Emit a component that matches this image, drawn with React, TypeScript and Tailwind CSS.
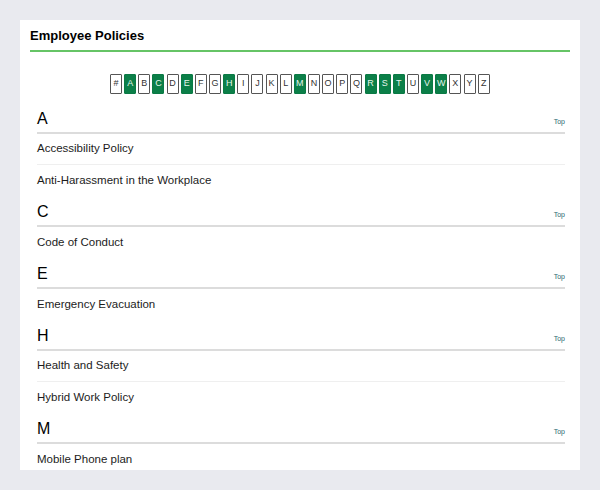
import React from "react";

const letters = ["#", "A", "B", "C", "D", "E", "F", "G", "H", "I", "J", "K", "L", "M", "N", "O", "P", "Q", "R", "S", "T", "U", "V", "W", "X", "Y", "Z"];
const active = new Set(["A", "C", "E", "H", "M", "R", "S", "T", "V", "W"]);

const sections: { letter: string; items: string[] }[] = [
  { letter: "A", items: ["Accessibility Policy", "Anti-Harassment in the Workplace"] },
  { letter: "C", items: ["Code of Conduct"] },
  { letter: "E", items: ["Emergency Evacuation"] },
  { letter: "H", items: ["Health and Safety", "Hybrid Work Policy"] },
  { letter: "M", items: ["Mobile Phone plan"] },
];

export default function App() {
  return (
    <div className="min-h-screen bg-[#e9eaef] p-[20px]" style={{ fontFamily: '"Liberation Sans", Arial, sans-serif' }}>
      <div className="bg-white h-[450px] overflow-hidden px-[10px]">
        <div className="pt-[6px] pb-[4px] border-b-2 border-[#66c466]">
          <h1 className="text-[13px] leading-[20px] font-bold text-black">Employee Policies</h1>
        </div>
        <div className="flex justify-between w-[380px] mx-auto mt-[22px]">
          {letters.map((l) => {
            const on = active.has(l);
            return (
              <div
                key={l}
                className={
                  on
                    ? "w-[12px] h-[20px] flex items-center justify-center rounded-[1px] border border-[#0b7a45] bg-[#0b7f48] text-[#e6f5ec] text-[9px]"
                    : "w-[12px] h-[20px] flex items-center justify-center rounded-[1px] border border-[#555] bg-white text-[#333] text-[9px]"
                }
              >
                {l}
              </div>
            );
          })}
        </div>
        <div className="ml-[7px] mr-[5px] mt-[9px]">
          {sections.map((s) => (
            <div key={s.letter}>
              <div className="h-[31px] flex items-end justify-between border-b-2 border-[#dcdcdc] pb-[3px]">
                <span className="text-[16px] leading-[18px] text-black relative top-[-1px]">{s.letter}</span>
                <span className="text-[7px] leading-[8px] text-[#2a6a70] relative top-[-3px]">Top</span>
              </div>
              {s.items.map((it, i) => (
                <div
                  key={it}
                  className={
                    i < s.items.length - 1
                      ? "h-[31px] flex items-center border-b border-[#efefef] text-[11.5px] text-[#1c1c1c]"
                      : "h-[31px] flex items-center text-[11.5px] text-[#1c1c1c]"
                  }
                >
                  {it}
                </div>
              ))}
            </div>
          ))}
        </div>
      </div>
    </div>
  );
}
